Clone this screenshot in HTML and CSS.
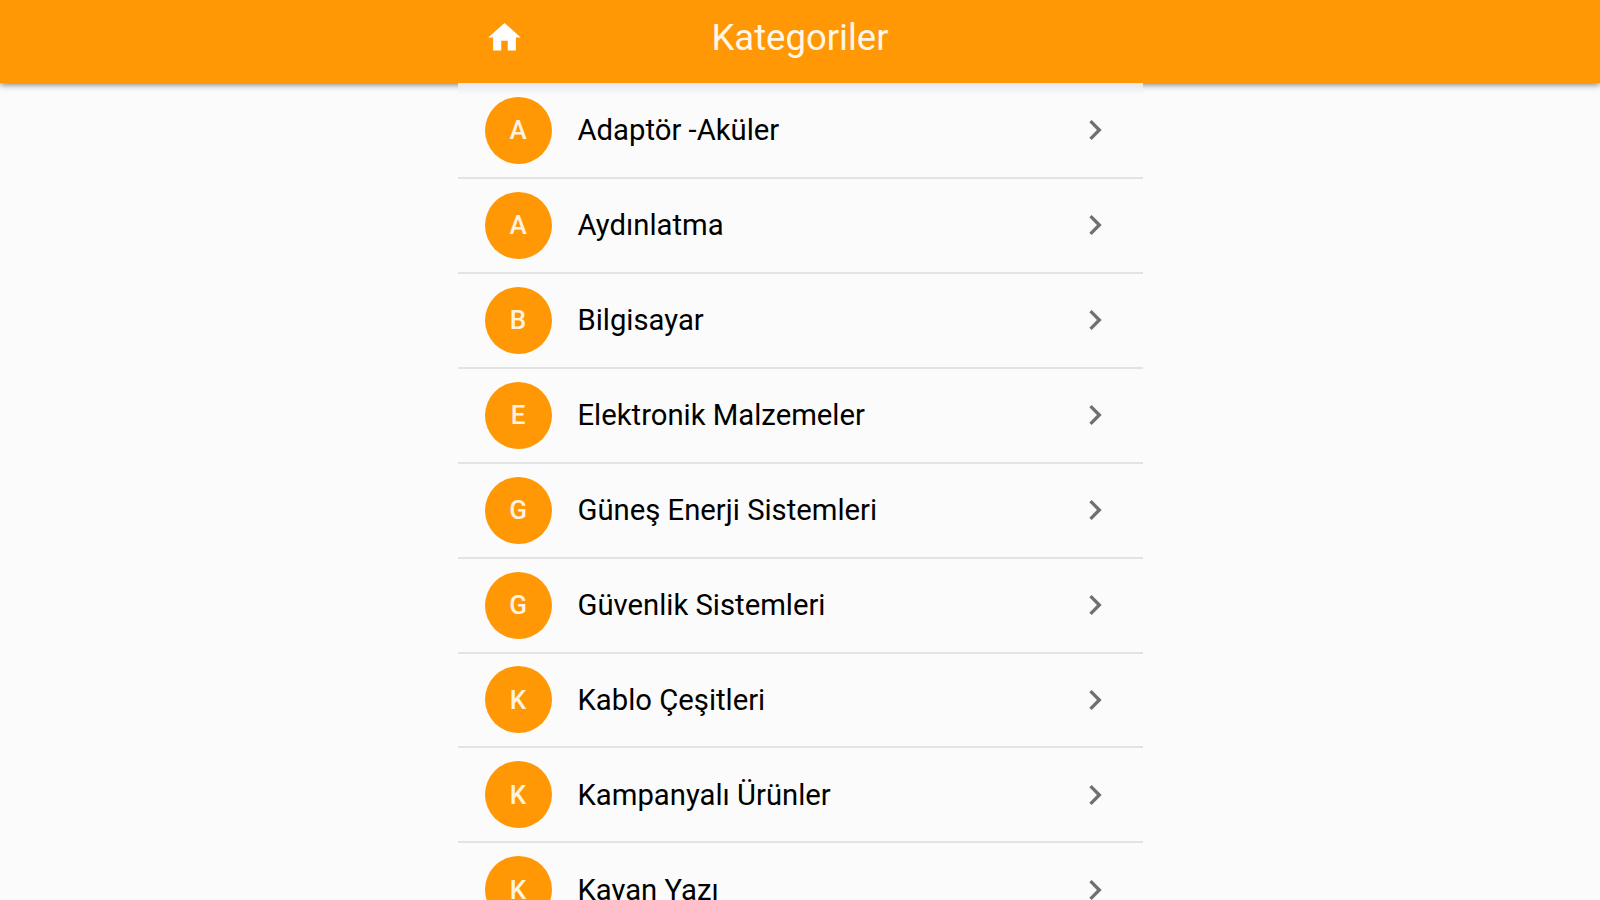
FILE: index.html
```
<!DOCTYPE html>
<html lang="tr">
<head>
  <meta charset="UTF-8">
  <title>Kategoriler</title>
  <link rel="stylesheet" href="styles.css">
</head>
<body>
  <header class="header">
    <div class="header-inner">
      <svg class="home" viewBox="0 0 24 24"><path d="M10 20v-6h4v6h5v-8h3L12 3 2 12h3v8z"/></svg>
      <h1>Kategoriler</h1>
    </div>
  </header>

  <ul id="lista" class="lista"></ul>

  <script>
    const kategoriler = [
      'Adaptör -Aküler',
      'Aydınlatma',
      'Bilgisayar',
      'Elektronik Malzemeler',
      'Güneş Enerji Sistemleri',
      'Güvenlik Sistemleri',
      'Kablo Çeşitleri',
      'Kampanyalı Ürünler',
      'Kayan Yazı'
    ];

    const ul = document.getElementById('lista');
    kategoriler.forEach(k => {
      ul.innerHTML += `<li class="satir">
        <span class="avatar">${k[0]}</span>
        <span class="ad">${k}</span>
        <svg class="ok" viewBox="0 0 24 24"><path d="M10 6 8.59 7.41 13.17 12l-4.58 4.59L10 18l6-6z"/></svg>
      </li>`;
    });
  </script>
</body>
</html>
```
FILE: styles.css
```
* {
  box-sizing: border-box;
}
body {
  margin: 0;
  height: 900px;
  overflow: hidden;
  font-family: Roboto, sans-serif;
  background: #fbfbfb;
}
.header {
  height: 83px;
  background: #ff9804;
  box-shadow: 0 1px 7px rgba(0,0,0,0.6);
}
.header-inner {
  display: grid;
  grid-template-columns: 92px 1fr 92px;
  align-items: center;
  width: 685px;
  height: 74px;
  margin: 0 auto;
}
.home {
  width: 39px;
  height: 39px;
  margin-left: 27px;
  fill: #fff;
}
h1 {
  margin: 0;
  text-align: center;
  font-size: 36.5px;
  font-weight: 400;
  color: #fff6e8;
}
.lista {
  position: relative;
  list-style: none;
  width: 685px;
  margin: 0 auto;
  padding: 1px 0 0;
  background: linear-gradient(#e6e7ec, #fbfbfb 12px);
}
.satir {
  display: flex;
  align-items: center;
  height: 94.93px;
  padding: 0 28px 0 27px;
  border-bottom: 2px solid #e3e3e3;
}
.avatar {
  display: flex;
  align-items: center;
  justify-content: center;
  width: 67px;
  height: 67px;
  border-radius: 50%;
  background: #ff9804;
  color: #fff3e0;
  font-size: 26px;
  font-weight: 500;
}
.ad {
  flex: 1;
  margin-left: 26px;
  font-size: 29.25px;
  color: #000;
}
.ok {
  width: 40px;
  height: 40px;
  fill: #707070;
}
```
